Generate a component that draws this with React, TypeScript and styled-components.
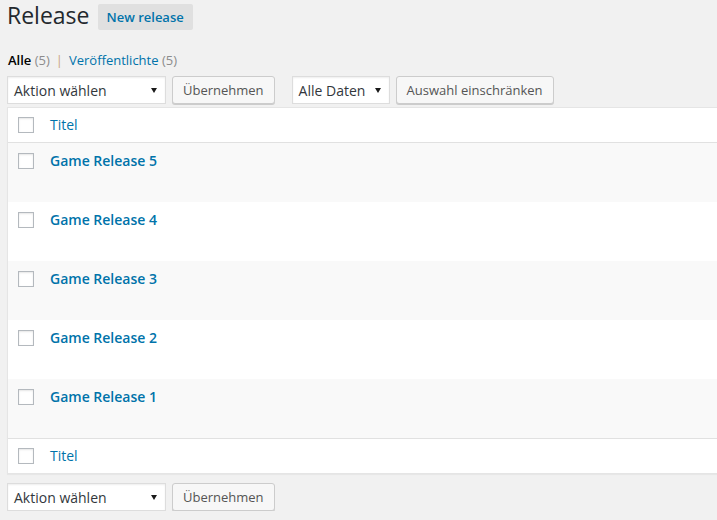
import React from 'react';
import styled, { createGlobalStyle } from 'styled-components';

const GlobalStyle = createGlobalStyle`
  html, body { margin: 0; padding: 0; background: #f1f1f1; }
  body {
    font-family: "Open Sans", "Liberation Sans", sans-serif;
    color: #444;
    font-size: 13px;
  }
  * { box-sizing: border-box; }
`;

const Page = styled.div`
  padding: 1px 0 0 7px;
  overflow: hidden;
`;

const Header = styled.div`
  display: flex;
  align-items: flex-start;
  gap: 8px;
`;

const Title = styled.h1`
  margin: 0;
  font-size: 23px;
  font-weight: 400;
  line-height: 29px;
  color: #23282d;
`;

const AddNew = styled.a`
  margin-top: 3px;
  height: 26px;
  padding: 0 9px;
  display: inline-flex;
  align-items: center;
  background: #e0e0e0;
  color: #0073aa;
  font-weight: 600;
  font-size: 13px;
  border-radius: 2px;
  text-decoration: none;
`;

const Views = styled.ul`
  list-style: none;
  margin: 20px 0 0 1px;
  padding: 0;
  display: flex;
  line-height: 20px;
  font-size: 13px;
`;

const ViewItem = styled.li`
  color: #c9a47c;
`;

const ViewLink = styled.a<{ $current?: boolean }>`
  color: ${p => (p.$current ? '#000' : '#0073aa')};
  font-weight: ${p => (p.$current ? 600 : 400)};
  text-decoration: none;
`;

const Count = styled.span`
  color: #8c8c8c;
  font-weight: 400;
`;

const Sep = styled.span`
  margin: 0 6px;
`;

const Toolbar = styled.div<{ $top?: boolean }>`
  display: flex;
  align-items: flex-start;
  margin: ${p => (p.$top ? '6px 0 3px' : '9px 0 0')};
`;

const Group = styled.div`
  display: flex;
  align-items: flex-start;
  gap: 6px;
  & + & { margin-left: 17px; }
`;

const Select = styled.div<{ $w: number }>`
  width: ${p => p.$w}px;
  height: 28px;
  padding: 0 8px 0 6px;
  display: flex;
  align-items: center;
  justify-content: space-between;
  background: #fff;
  border: 1px solid #ddd;
  box-shadow: inset 0 1px 2px rgba(0, 0, 0, 0.07);
  font-size: 14px;
  color: #32373c;
`;

const Arrow = styled.span`
  width: 0;
  height: 0;
  border-left: 3px solid transparent;
  border-right: 3px solid transparent;
  border-top: 5px solid #1a1a1a;
`;

const Button = styled.button`
  height: 28px;
  padding: 0 10px 1px;
  font-family: inherit;
  font-size: 13px;
  color: #555;
  background: #f7f7f7;
  border: 1px solid #ccc;
  border-radius: 3px;
  box-shadow: 0 1px 0 #ccc;
  cursor: pointer;
`;

const TableWrap = styled.div`
  margin-right: -20px;
  background: #fff;
  border: 1px solid #e5e5e5;
  box-shadow: 0 1px 1px rgba(0, 0, 0, 0.04);
`;

const Table = styled.table`
  width: 100%;
  border-collapse: separate;
  border-spacing: 0;
`;

const HeadRow = styled.tr<{ $foot?: boolean }>`
  height: 35px;
  background: #fff;
  & > * {
    ${p => (p.$foot ? 'border-top: 1px solid #e1e1e1;' : 'border-bottom: 1px solid #e1e1e1;')}
  }
`;

const BodyRow = styled.tr<{ $alt: boolean }>`
  height: 59px;
  background: ${p => (p.$alt ? '#f9f9f9' : '#fff')};
`;

const CheckCell = styled.td<{ $head?: boolean }>`
  width: 32px;
  padding: ${p => (p.$head ? '0 0 0 10px' : '10px 0 0 10px')};
  vertical-align: ${p => (p.$head ? 'middle' : 'top')};
  line-height: 0;
`;

const Checkbox = styled.span`
  display: inline-block;
  width: 16px;
  height: 16px;
  background: #fff;
  border: 1px solid #b4b9be;
  box-shadow: inset 0 1px 2px rgba(0, 0, 0, 0.1);
`;

const HeadCell = styled.th`
  text-align: left;
  font-weight: 400;
  padding: 0 10px;
  vertical-align: middle;
  font-size: 14px;
  line-height: 20px;
`;

const HeadLink = styled.a`
  color: #0073aa;
  text-decoration: none;
`;

const TitleCell = styled.td`
  padding: 8px 10px;
  vertical-align: top;
  font-size: 14px;
  line-height: 19.6px;
`;

const RowTitle = styled.a`
  color: #0073aa;
  font-weight: 600;
  text-decoration: none;
`;

const releases = [5, 4, 3, 2, 1];

function ActionBar({ top }: { top?: boolean }) {
  return (
    <Toolbar $top={top}>
      <Group>
        <Select $w={159}>
          <span>Aktion wählen</span>
          <Arrow />
        </Select>
        <Button>Übernehmen</Button>
      </Group>
      {top && (
        <Group>
          <Select $w={98}>
            <span>Alle Daten</span>
            <Arrow />
          </Select>
          <Button>Auswahl einschränken</Button>
        </Group>
      )}
    </Toolbar>
  );
}

export default function App() {
  return (
    <>
      <GlobalStyle />
      <Page>
        <Header>
          <Title>Release</Title>
          <AddNew href="#">New release</AddNew>
        </Header>
        <Views>
          <ViewItem>
            <ViewLink $current href="#">
              Alle <Count>(5)</Count>
            </ViewLink>
            <Sep>|</Sep>
          </ViewItem>
          <ViewItem>
            <ViewLink href="#">
              Veröffentlichte <Count>(5)</Count>
            </ViewLink>
          </ViewItem>
        </Views>
        <ActionBar top />
        <TableWrap>
          <Table>
            <thead>
              <HeadRow>
                <CheckCell $head>
                  <Checkbox />
                </CheckCell>
                <HeadCell>
                  <HeadLink href="#">Titel</HeadLink>
                </HeadCell>
              </HeadRow>
            </thead>
            <tbody>
              {releases.map((n, i) => (
                <BodyRow key={n} $alt={i % 2 === 0}>
                  <CheckCell>
                    <Checkbox />
                  </CheckCell>
                  <TitleCell>
                    <RowTitle href="#">Game Release {n}</RowTitle>
                  </TitleCell>
                </BodyRow>
              ))}
            </tbody>
            <tfoot>
              <HeadRow $foot>
                <CheckCell $head>
                  <Checkbox />
                </CheckCell>
                <HeadCell>
                  <HeadLink href="#">Titel</HeadLink>
                </HeadCell>
              </HeadRow>
            </tfoot>
          </Table>
        </TableWrap>
        <ActionBar />
      </Page>
    </>
  );
}
